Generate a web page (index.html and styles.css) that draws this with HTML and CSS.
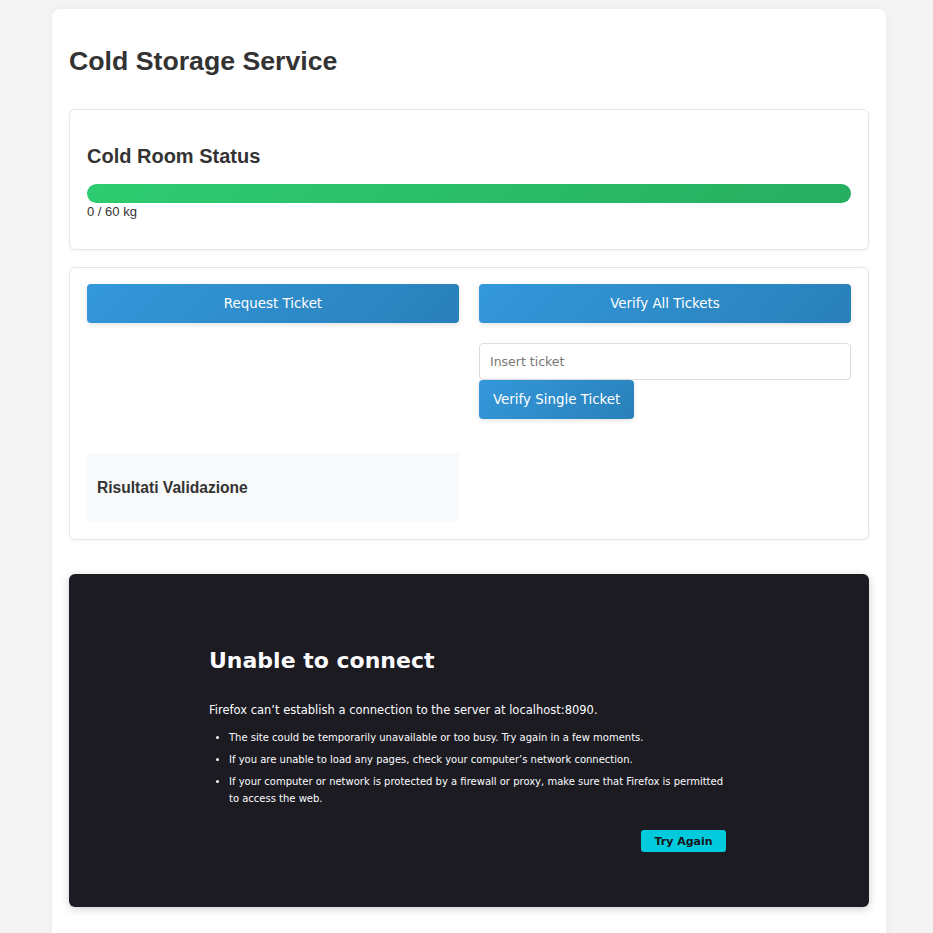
FILE: index.html
```html
<!DOCTYPE html>
<html>
<head>
<meta charset="utf-8">
<link rel="stylesheet" href="styles.css">
</head>
<body>
<div class="container">
  <h1 class="title">Cold Storage Service</h1>

  <section class="card status-card">
    <h2 class="card-title">Cold Room Status</h2>
    <div class="bar"><div class="bar-fill"></div></div>
    <div class="bar-label">0 / 60 kg</div>
  </section>

  <section class="card actions-card">
    <div class="col">
      <button class="btn btn-wide">Request Ticket</button>
    </div>
    <div class="col">
      <button class="btn btn-wide">Verify All Tickets</button>
      <input class="ticket-input" type="text" placeholder="Insert ticket">
      <button class="btn btn-single">Verify Single Ticket</button>
    </div>
    <div class="results">
      <h3 class="results-title">Risultati Validazione</h3>
    </div>
  </section>

  <section class="error-panel">
    <div class="error-inner">
      <h1 class="error-title">Unable to connect</h1>
      <p class="error-lead">Firefox can’t establish a connection to the server at localhost:8090.</p>
      <ul class="error-list">
        <li>The site could be temporarily unavailable or too busy. Try again in a few moments.</li>
        <li>If you are unable to load any pages, check your computer’s network connection.</li>
        <li>If your computer or network is protected by a firewall or proxy, make sure that Firefox is permitted to access the web.</li>
      </ul>
      <div class="error-actions">
        <button class="try-again">Try Again</button>
      </div>
    </div>
  </section>
</div>
</body>
</html>
```

FILE: styles.css
```css
html, body {
  margin: 0;
  padding: 0;
}
body {
  background: #f4f4f4;
  font-family: "Liberation Sans", Arial, sans-serif;
  color: #333;
  padding: 9px 0 0 52px;
}
.container {
  width: 800px;
  min-height: 940px;
  background: #fff;
  border-radius: 8px;
  padding: 0 17px;
  box-shadow: 0 0 10px rgba(0,0,0,0.05);
}
.title {
  margin: 0;
  padding-top: 36px;
  font-size: 26.7px;
  font-weight: bold;
  color: #333;
  line-height: 32px;
  margin-bottom: 32px;
}
.card {
  background: #fff;
  border: 1px solid #e6e6e6;
  border-radius: 6px;
  box-shadow: 0 1px 3px rgba(0,0,0,0.05);
}
.status-card {
  padding: 16px 17px 30px;
  margin-bottom: 17px;
}
.card-title {
  margin: 19px 0 16px;
  font-size: 20px;
  line-height: 23px;
  font-weight: bold;
  color: #333;
}
.bar {
  height: 19px;
  border-radius: 10px;
  background: #eee;
  overflow: hidden;
}
.bar-fill {
  height: 100%;
  width: 100%;
  background: linear-gradient(135deg, #2ecc71, #27ae60);
}
.bar-label {
  font-size: 13px;
  line-height: 15px;
  color: #333;
  margin-top: 1px;
}
.actions-card {
  padding: 16px 17px 17px;
  display: grid;
  grid-template-columns: 1fr 1fr;
  column-gap: 20px;
  row-gap: 34px;
  margin-bottom: 34px;
}
.col {
  display: flex;
  flex-direction: column;
  align-items: flex-start;
}
.btn {
  font-family: "DejaVu Sans", sans-serif;
  font-size: 13.4px;
  color: #fff;
  border: none;
  border-radius: 4px;
  background: linear-gradient(135deg, #3498db, #2980b9);
  box-shadow: 0 2px 5px rgba(0,0,0,0.1);
  height: 39px;
  cursor: pointer;
}
.btn-wide {
  width: 100%;
}
.btn-single {
  padding: 0 14px;
}
.ticket-input {
  box-sizing: border-box;
  width: 100%;
  height: 37px;
  margin-top: 20px;
  border: 1px solid #ddd;
  border-radius: 4px;
  padding: 0 10px;
  font-family: "DejaVu Sans", sans-serif;
  font-size: 12.5px;
  color: #333;
}
.ticket-input::placeholder {
  color: #777;
}
.results {
  background: #f8f9fa;
  border-radius: 4px;
  padding: 10px;
}
.results-title {
  margin: 15px 0;
  font-size: 15.6px;
  line-height: 19px;
  font-weight: bold;
  color: #333;
}
.error-panel {
  background: #1c1b22;
  border-radius: 6px;
  box-shadow: 0 2px 8px rgba(0,0,0,0.2);
  height: 333px;
  box-sizing: border-box;
  padding-top: 73px;
  color: #fbfbfe;
  font-family: "DejaVu Sans", sans-serif;
}
.error-inner {
  width: 517px;
  margin-left: 140px;
}
.error-title {
  margin: 0;
  font-size: 22px;
  line-height: 28px;
  font-weight: bold;
  color: #fbfbfe;
}
.error-lead {
  margin: 27px 0 0;
  font-size: 11.5px;
  line-height: 16px;
}
.error-list {
  margin: 11px 0 0;
  padding-left: 20px;
  font-size: 10px;
  line-height: 17px;
}
.error-list li {
  margin-bottom: 5px;
}
.error-actions {
  display: flex;
  justify-content: flex-end;
  margin-top: 23px;
}
.try-again {
  font-family: "DejaVu Sans", sans-serif;
  font-size: 11px;
  font-weight: bold;
  color: #15141a;
  background: #00cadb;
  border: none;
  border-radius: 3px;
  width: 85px;
  height: 22px;
  padding: 0;
}
```
